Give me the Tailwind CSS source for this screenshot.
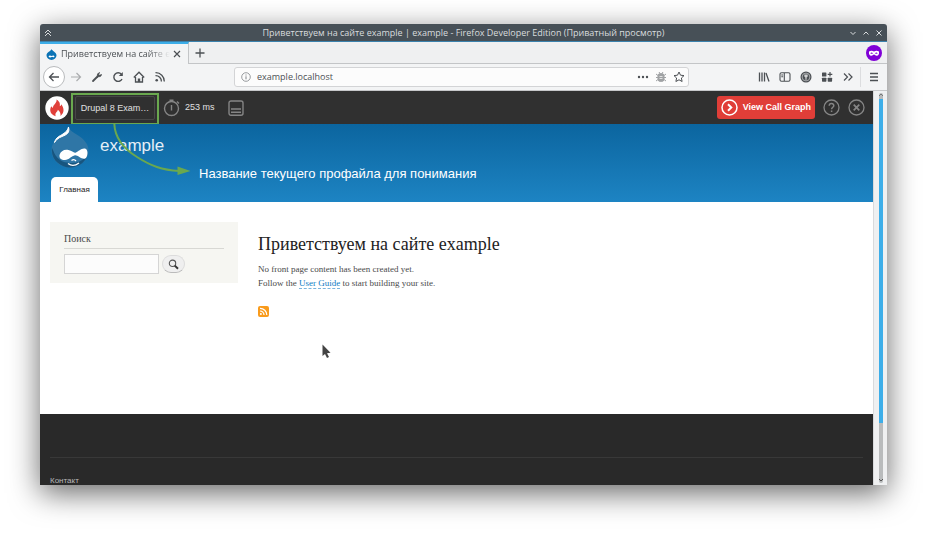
<!DOCTYPE html>
<html lang="ru">
<head>
<meta charset="utf-8">
<title>Приветствуем на сайте example | example</title>
<script src="https://cdn.jsdelivr.net/npm/@tailwindcss/browser@4"></script>
</head>
<body class="bg-white">
<div class="flex h-screen pt-6 pr-[41px] pb-12 pl-10">
  <div class="flex min-w-0 flex-1 flex-col overflow-hidden rounded-t-[3px] bg-[#eff0f1] font-['Open_Sans','Noto_Sans',sans-serif] text-[9px] text-[#4c5054] shadow-[0_8px_30px_rgba(0,0,0,0.6)]">

    <!-- Window title bar -->
    <header class="flex h-[18px] shrink-0 items-center border-b border-[#3b82ad] bg-[#475057] px-1 text-[#d9dcde]">
      <button aria-label="Keep above" class="flex w-12 items-center"><svg class="size-2" viewBox="0 0 8 8" fill="none" stroke="currentColor" stroke-width="1"><path d="M1 4l3-3 3 3M1 7l3-3 3 3"/></svg></button>
      <div class="flex-1 text-center leading-4">Приветствуем на сайте example | example - Firefox Developer Edition (Приватный просмотр)</div>
      <div class="flex w-12 justify-end gap-[5px]">
        <button aria-label="Minimize"><svg class="size-2" viewBox="0 0 8 8" fill="none" stroke="currentColor"><path d="M1.500 3L4 5.500 6.500 3"/></svg></button>
        <button aria-label="Maximize"><svg class="size-2" viewBox="0 0 8 8" fill="none" stroke="currentColor"><path d="M1.500 5.500L4 3l2.500 2.500"/></svg></button>
        <button aria-label="Close window"><svg class="size-2" viewBox="0 0 8 8" fill="none" stroke="currentColor"><path d="M1.500 1.500l5 5m0-5l-5 5"/></svg></button>
      </div>
    </header>

    <!-- Tab strip -->
    <div class="flex h-[22px] shrink-0">
      <div class="flex w-[149px] items-center border-t-2 border-r border-t-[#3daee9] border-r-[#c3c5c7] bg-[#f3f4f5] pr-[7px] pl-[6px]">
        <svg class="size-[11px] shrink-0" viewBox="0 0 11 11"><path d="M5.500 0C6 2 10.500 3 10.500 6.300a5 4.600 0 0 1-10 0C.5 3 5 2.300 5.500 0z" fill="#0b73b5"/><path d="M2.600 7.300c1-1.500 2.100-.6 2.900-.3.900 0 2.300-1.300 2.900.3.300 1.100-1.500 1.300-2.400.5-1 .5-3.200 1.200-3.400-.5z" fill="#fff"/></svg>
        <span class="ml-1 min-w-0 flex-1 overflow-hidden whitespace-nowrap mask-r-from-80% mask-r-to-100%">Приветствуем на сайте example</span>
        <button aria-label="Close tab" class="ml-[3px]"><svg class="size-2" viewBox="0 0 8 8" fill="none" stroke="currentColor" stroke-width="1.200"><path d="M1 1l6 6m0-6L1 7"/></svg></button>
      </div>
      <div class="flex flex-1 items-center justify-between border-b border-[#c3c5c7] pr-[5px] pl-[6px]">
        <button aria-label="New tab"><svg class="size-[10px]" viewBox="0 0 10 10" fill="none" stroke="currentColor" stroke-width="1.300"><path d="M5 .5v9M.5 5h9"/></svg></button>
        <svg class="size-4" viewBox="0 0 16 16"><circle cx="8" cy="8" r="8" fill="#8000d7"/><path d="M3 6.500c2-1.200 3.600-.8 5 .1 1.400-.9 3-1.300 5-.1.400 2.400-.5 4.300-2.300 4.300-1.200 0-1.700-1.300-2.700-1.300s-1.500 1.300-2.700 1.300C3.500 10.800 2.600 8.900 3 6.500z" fill="#fff"/><path d="M4.300 8.200q1.500-1.400 2.700.2-1.500 1-2.700-.2zm7.400 0q-1.500-1.400-2.700.2 1.500 1 2.700-.2z" fill="#8000d7"/></svg>
      </div>
    </div>

    <!-- Navigation bar -->
    <nav class="flex h-[27px] shrink-0 items-center border-b border-[#c6c7c9] bg-[#f3f4f5] pl-[3px]">
      <button aria-label="Back" class="flex size-[22px] items-center justify-center rounded-full border border-[#b9bbbd] bg-white"><svg class="size-3" viewBox="0 0 12 12" fill="none" stroke="currentColor" stroke-width="1.300"><path d="M11 6H1.500M5.500 2L1.500 6l4 4"/></svg></button>
      <button aria-label="Forward" class="flex w-[21px] justify-center text-[#aaacae]"><svg class="size-3" viewBox="0 0 12 12" fill="none" stroke="currentColor" stroke-width="1.200"><path d="M1 6h9.500M6.500 2l4 4-4 4"/></svg></button>
      <button aria-label="Developer tools" class="flex w-[21px] justify-center"><svg class="size-3" viewBox="0 0 12 12" fill="none" stroke="currentColor" stroke-linecap="round"><path d="M2 10l4.500-4.500" stroke-width="1.800"/><path d="M8.500 1.700C6.500 2 6 3.500 6.500 5.500c2 .6 3.900 0 4-2L8.700 4.300 7.600 3.300z" fill="currentColor" stroke-width=".8"/></svg></button>
      <button aria-label="Reload" class="flex w-[21px] justify-center"><svg class="size-3" viewBox="0 0 12 12" fill="none" stroke="currentColor" stroke-width="1.400"><path d="M10 8a4.300 4.300 0 1 1-.6-4.800"/><path d="M10.800 1v4h-4z" fill="currentColor" stroke="none"/></svg></button>
      <button aria-label="Home" class="flex w-[21px] justify-center"><svg class="size-3" viewBox="0 0 12 12" fill="none" stroke="currentColor" stroke-width="1.300"><path d="M.8 6.500L6 1.200l5.200 5.300M2.500 6v5h7V6"/><path d="M4.800 11V7.500h2.400V11z" fill="currentColor" stroke="none"/></svg></button>
      <button aria-label="Subscribe" class="flex w-[21px] justify-center"><svg class="size-3" viewBox="0 0 12 12" fill="none" stroke="currentColor" stroke-width="1.300"><path d="M1.500 1.700a8.500 8.500 0 0 1 8.800 8.800M1.500 4.600a5.700 5.700 0 0 1 5.900 5.900"/><circle cx="2.700" cy="9.300" r="1.300" fill="currentColor" stroke="none"/></svg></button>
      <div class="mx-16 flex h-5 min-w-0 flex-1 items-center rounded-[3px] border border-[#d3d4d6] bg-[#fcfcfc] pr-[3px] pl-[6px]">
        <svg class="size-[10px] shrink-0 text-[#808488]" viewBox="0 0 10 10" fill="none" stroke="currentColor"><circle cx="5" cy="5" r="4.300" stroke-width=".8"/><path d="M5 4.300v3M5 2.500v1"/></svg>
        <input aria-label="Address" class="ml-[6px] min-w-0 flex-1 bg-transparent leading-3 outline-none" value="example.localhost">
        <div class="flex items-center gap-[6px]">
          <button aria-label="Page actions"><svg class="size-3" viewBox="0 0 12 12" fill="currentColor"><circle cx="2" cy="6" r="1.200"/><circle cx="6" cy="6" r="1.200"/><circle cx="10" cy="6" r="1.200"/></svg></button>
          <button aria-label="Debug" class="text-[#a0a2a4]"><svg class="size-3" viewBox="0 0 12 12" fill="none" stroke="currentColor"><rect x="3" y="2.500" width="6" height="8" rx="2.500" fill="currentColor"/><path d="M1 3l2 1.500M11 3L9 4.500M1 6.500h10M1 10l2-1.500m8 1.500L9 8.500M4 1l1 1.500M8 1L7 2.500"/><path d="M4.500 5.500h3m-3 2h3" stroke="#fff" stroke-width=".7"/></svg></button>
          <button aria-label="Bookmark"><svg class="size-3" viewBox="0 0 12 12" fill="none" stroke="currentColor" stroke-linejoin="round"><path d="M6 1l1.500 3.200 3.500.4-2.600 2.400.7 3.500L6 8.800l-3.100 1.700.7-3.500L1 4.600l3.500-.4z"/></svg></button>
        </div>
      </div>
      <button aria-label="Library" class="flex w-[21px] justify-center"><svg class="size-3" viewBox="0 0 12 12" fill="none" stroke="currentColor" stroke-width="1.300"><path d="M1.500 1.500v9M4 1.500v9M6.500 1.500v9M8 2l3 8.500"/></svg></button>
      <button aria-label="Sidebars" class="flex w-[21px] justify-center"><svg class="size-3" viewBox="0 0 12 12" fill="none" stroke="currentColor" stroke-width="1.100"><rect x="1" y="1.800" width="10" height="8.400" rx="1.500"/><path d="M5.300 2v8M2.300 4h1.800M2.300 5.700h1.800" /></svg></button>
      <button aria-label="Privacy" class="flex w-[21px] justify-center"><svg class="size-3" viewBox="0 0 12 12"><circle cx="6" cy="6" r="5.500" fill="currentColor"/><circle cx="6" cy="6" r="3.900" fill="none" stroke="#d0d1d2" stroke-width=".7"/><path d="M4.300 3.500h3.400v2L6.600 6.500v2.300H5.400V6.500L4.300 5.500z" fill="#d0d1d2"/></svg></button>
      <button aria-label="Extensions" class="flex w-[21px] justify-center"><svg class="size-3" viewBox="0 0 12 12" fill="currentColor"><rect x="1" y="1.500" width="4.400" height="4" rx=".6"/><rect x="1" y="6.700" width="4.400" height="4" rx=".6"/><rect x="6.700" y="6.700" width="4.400" height="4" rx=".6"/><path d="M8.400 1h1.200v1.700h1.700v1.200H9.600v1.700H8.400V3.900H6.700V2.700h1.700z"/></svg></button>
      <button aria-label="More tools" class="flex w-[21px] justify-center"><svg class="size-3" viewBox="0 0 12 12" fill="none" stroke="currentColor" stroke-width="1.200"><path d="M2 2.500L5.500 6 2 9.500M6.500 2.500L10 6 6.500 9.500"/></svg></button>
      <button aria-label="Menu" class="ml-[2px] flex h-5 w-[27px] items-center justify-center border-l border-[#dcdddf]"><svg class="size-[10px]" viewBox="0 0 10 10" stroke="currentColor" stroke-width="1.300"><path d="M1 1.500h8M1 5h8M1 8.500h8"/></svg></button>
    </nav>

    <div class="flex min-h-0 flex-1">
      <main class="relative flex min-w-0 flex-1 flex-col overflow-hidden bg-white">
        <!-- Profiler toolbar -->
        <div class="flex h-[33px] shrink-0 items-center bg-[#303030] pr-2 pl-[5px] font-['Liberation_Sans',sans-serif] text-[#e0e0e0]">
          <svg class="size-6 shrink-0" viewBox="0 0 24 24"><circle cx="12" cy="12" r="11.700" fill="#fff"/><path d="M11.500 3.500c3.600 2.300 3.600 4.400 3.300 6.700.9-.4 1.300-1.100 1.500-2 2.800 4 3.500 8-.8 11.800.5-2.700-.7-4.800-2.700-6.300.1 1.700-2 2.500-2.300 4-.3.900-.1 1.700.2 2.500C5.500 18.500 4 14.500 6.300 10.300c.5.900.9 1.300 1.600 1.600.1-3.500 4.400-4.800 3.600-8.400z" fill="#e0403a"/></svg>
          <div class="mt-[2px] ml-[2px] h-8 w-[88px] border-2 border-[#6aa84f] px-[2px] pt-px pb-[3px]">
            <button class="h-full w-full rounded-[2px] border border-[#474747] text-[9px] leading-3 whitespace-nowrap">Drupal 8 Exam…</button>
          </div>
          <svg class="ml-1 size-[18px] shrink-0" viewBox="0 0 18 18" fill="none" stroke="#858585" stroke-width="1.400"><circle cx="8.500" cy="9.500" r="7"/><path d="M8.500 6v5.500M6.500 1.300h4M14 2.500l2 2"/></svg>
          <span class="ml-1 text-[9px]">253 ms</span>
          <svg class="ml-[13px] size-4 shrink-0" viewBox="0 0 16 16" fill="none" stroke="#858585" stroke-width="1.400"><rect x="1" y="1" width="14" height="14.300" rx="2"/><path d="M3 9h10M3 12.300h10"/></svg>
          <a href="#graph" class="ml-auto flex h-[23px] items-center rounded-[3px] bg-[#e03e38] px-1 text-[9px] font-bold text-white"><svg class="mr-[5px] size-[17px]" viewBox="0 0 17 17" fill="none" stroke="#fff" stroke-width="1.500"><circle cx="8.500" cy="8.500" r="7.500"/><path d="M7 5.300l3.300 3.200L7 11.700" stroke-width="2"/></svg>View Call Graph</a>
          <button aria-label="Help" class="ml-2"><svg class="size-[17px]" viewBox="0 0 17 17" fill="none" stroke="#858585" stroke-width="1.300"><circle cx="8.500" cy="8.500" r="7.500"/><path d="M6.200 6.800c.1-3 4.700-2.800 4.600-.1 0 1.500-2.200 1.600-2.200 3.500M8.600 11.500v1.500" stroke-width="1.500"/></svg></button>
          <button aria-label="Close" class="ml-2"><svg class="size-[17px]" viewBox="0 0 17 17" fill="none" stroke="#858585" stroke-width="1.300"><circle cx="8.500" cy="8.500" r="7.500"/><path d="M5.700 5.700l5.600 5.600m0-5.600l-5.600 5.600" stroke-width="1.700"/></svg></button>
        </div>

        <!-- Site header -->
        <header class="flex h-[78px] shrink-0 flex-col justify-between bg-linear-to-b from-[#0b659f] to-[#1d84c3] pl-[11px] font-['Liberation_Sans',sans-serif]">
          <div class="flex">
            <svg class="mt-[2px] h-[42px] w-[38px]" viewBox="0 0 38 42"><path d="M17.500 0c1.500 5.500 5.500 6.500 10.500 10 5 3.500 9.500 8 9.500 14.500C37.500 34 29 41.500 19 41.500S.5 34 .5 24.500C.5 17 5 12.500 10.500 9.500 14.500 7.300 17 4.500 17.500 0z" fill="#2f76a6"/><path d="M1 22c3 6 5 15 20 15 9 0 14-5 16-11-.5 9-9 15.500-18 15.500S-.5 34 1 22z" fill="#17557f"/><path d="M17.500 1C19 7 16 8.500 11 10.500 7 12 5 14 3.500 16.500 5 11 9 10 12 8c3-2 5-4 5.500-7z" fill="#fff" stroke="#fff"/><path d="M8.500 29c1-4 5-6 9-5 4 .7 5 3.500 7.500 2.500 2.500-1.200 6.500-5.500 10-3.500 2.200 1.600 2 8-.7 9.500-3.300 1.500-7.500-3.500-10.300-3.200-3.500.7-6 4.700-10 4.700-4 0-6-2-5.500-5z" fill="#fff"/><path d="M17 37.500q5 4 11-.5M20.500 34.500q2.500-2 4.500.5" fill="none" stroke="#fff" stroke-width="1.300"/></svg>
            <a href="#home" class="mt-3 ml-[11px] text-[17px] leading-5 text-[#e4eff7]">example</a>
          </div>
          <a href="#home" class="flex h-[25px] w-[47px] items-center justify-center rounded-t-[5px] bg-white text-[8px] text-[#222]">Главная</a>
        </header>

        <!-- Page body -->
        <div class="flex flex-1 items-start gap-5 px-[10px] pt-5 font-['Liberation_Serif',serif] text-[#4a4a4a]">
          <aside class="w-[188px] shrink-0 bg-[#f6f6f2] px-[14px] pt-[10px] pb-[9px]">
            <h2 class="border-b border-[#d8d8d4] pb-[2px] text-[10px] leading-[14px]">Поиск</h2>
            <form class="mt-[5px] flex items-center gap-[3px]">
              <input aria-label="Поиск" type="text" class="h-5 w-[95px] border border-[#d5d5d5] bg-[#fcfcfc] px-1">
              <button type="button" aria-label="Найти" class="flex h-[18px] w-[23px] items-center justify-center rounded-full border border-[#dcdcdc] border-b-[#bbb] bg-[#efefef]"><svg class="size-[11px]" viewBox="0 0 11 11" fill="none" stroke="#555"><circle cx="4.500" cy="4.300" r="3.200" stroke-width="1.100"/><path d="M6.800 6.600l3.200 3.200" stroke="#333" stroke-width="2"/></svg></button>
            </form>
          </aside>
          <article class="pt-2">
            <h1 class="text-[18px] leading-7 text-[#222]">Приветствуем на сайте example</h1>
            <p class="mt-1 text-[9px] leading-[14px]">No front page content has been created yet.<br>Follow the <a href="#guide" class="border-b border-dashed border-[#7ab5de] text-[#0f7cc4]">User Guide</a> to start building your site.</p>
            <a href="#feed" aria-label="RSS" class="mt-4 block w-[11px]"><svg class="size-[11px]" viewBox="0 0 11 11"><rect width="11" height="11" rx="2" fill="#f99b1c"/><path d="M2 2.300a6.700 6.700 0 0 1 6.800 6.700M2 5a4 4 0 0 1 4 4" fill="none" stroke="#fff" stroke-width="1.200"/><circle cx="2.900" cy="8.100" r="1" fill="#fff"/></svg></a>
          </article>
        </div>

        <!-- Site footer -->
        <footer class="h-[71px] shrink-0 overflow-hidden bg-[#292929] px-[10px] pt-[43px] font-['Liberation_Sans',sans-serif] text-[8px] text-[#b8b8b8]">
          <div class="border-t border-[#383838] pt-[17px]"><a href="#contact" class="block leading-3">Контакт</a></div>
        </footer>

        <!-- Annotation over the page -->
        <svg class="absolute top-[33px] left-[70px] h-[52px] w-[82px]" viewBox="0 0 82 52"><path d="M4.300 0C5 14 14 25 27 33c14 9 25 13 42 14" fill="none" stroke="#6aa84f" stroke-width="2"/><path d="M67.500 42.500l13 4.500-13 4z" fill="#6aa84f"/></svg>
        <p class="absolute top-[73px] left-[159px] font-['Liberation_Sans',sans-serif] text-[13px] leading-5 whitespace-nowrap text-white">Название текущего профайла для понимания</p>
        <svg class="absolute top-[253px] left-[282px] h-[15px] w-[9px]" viewBox="0 0 9 15"><path d="M.5.500v11.500l2.500-2 2 4 2-1-2-3.800 3.500-.4z" fill="#444"/></svg>
      </main>

      <!-- Scrollbar -->
      <div class="flex w-[14px] flex-col items-center border-l border-[#d9dadc] bg-[#eff0f1] pt-[2px] pb-[2px]" aria-hidden="true">
        <div class="flex w-1 flex-1 flex-col rounded-full bg-[#b9bbbc]">
          <svg class="h-[6px] w-1 shrink-0" viewBox="0 0 4 6" fill="none" stroke="#777"><path d="M0 3l2-2 2 2"/></svg>
          <div class="h-[83%] bg-[#3daee9]"></div>
          <svg class="mt-auto h-[6px] w-1 shrink-0 overflow-visible" viewBox="0 0 4 6" fill="none" stroke="#555"><path d="M0 2l2 2 2-2"/></svg>
        </div>
      </div>
    </div>
  </div>
</div>
</body>
</html>
